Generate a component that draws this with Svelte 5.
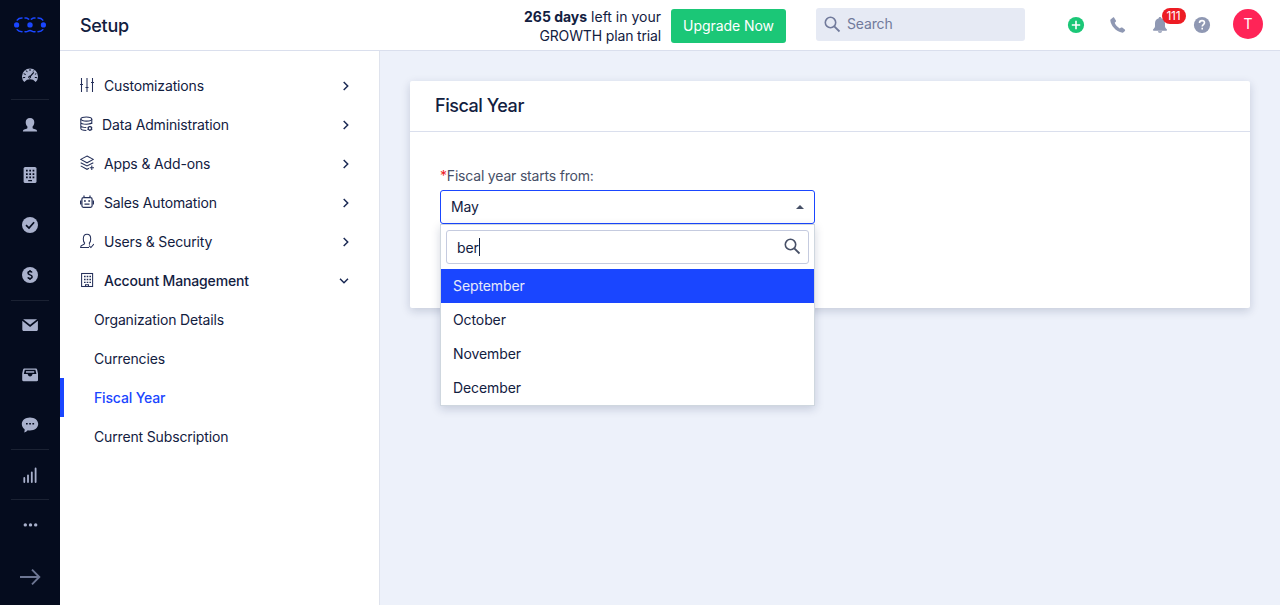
<script>
  const menu = [
    { label: 'Customizations', icon: 'sliders' },
    { label: 'Data Administration', icon: 'database' },
    { label: 'Apps & Add-ons', icon: 'layers' },
    { label: 'Sales Automation', icon: 'robot' },
    { label: 'Users & Security', icon: 'user' },
    { label: 'Account Management', icon: 'office', open: true }
  ];
  const children = ['Organization Details', 'Currencies', 'Fiscal Year', 'Current Subscription'];
  const current = 'Fiscal Year';
  const rail = [
    { name: 'dashboard', line: true },
    { name: 'contact' },
    { name: 'building' },
    { name: 'tasks' },
    { name: 'deals', line: true },
    { name: 'mail' },
    { name: 'inbox' },
    { name: 'chat', line: true },
    { name: 'reports', line: true },
    { name: 'more' }
  ];
  const months = ['September', 'October', 'November', 'December'];
  const active = 'September';
</script>

<div class="app">
  <aside class="rail">
    <div class="logo">
      <svg width="32" height="16" viewBox="0 0 32 16" fill="none" stroke="#1a46ff" stroke-width="1.5" stroke-linecap="round">
        <path d="M3.200 3.100C4.200 1.500 5.600 1 8 1M11 1h1.200c1.100 0 1.700.7 2.500 1.200M17.300 2.200c.8-.5 1.400-1.200 2.500-1.200H21M24 1c2.400 0 3.800.5 4.800 2.100M3.200 12.700c1 1.600 2.400 2.100 4.800 2.100M11 14.800h1.200c1.500 0 2.300-1.300 3.800-1.300s2.300 1.300 3.800 1.300H21M24 14.800c2.400 0 3.800-.5 4.800-2.100" />
        <g fill="#1a46ff" stroke="none"><circle cx="2.600" cy="7.900" r="2.600" /><circle cx="16" cy="7.900" r="2.700" /><circle cx="29.400" cy="7.900" r="2.600" /></g>
      </svg>
    </div>
    {#each rail as item}
      <div class="slot {item.name}" class:line={item.line}>
        <svg width="18" height="18" viewBox="0 0 18 18" fill="#a9b1cc">
          {#if item.name === 'dashboard'}
            <path d="M3.300 16A8 8 0 1 1 14.700 16L12 13.800Q9 12.500 6 13.800Z" />
            <g stroke="#050c1e" stroke-width="1" fill="none"><path d="M9 3v2M5.200 4.500l1.100 1.600M2.700 7.700l2 .8M2 11.700l2.200-.3M12.800 4.500l-.7 1M15.300 7.700l-1.400.6M16 11.700l-2.200-.3" /><path d="M8.600 11.200l4.200-4.800" stroke-width="1.200" /><circle cx="8.600" cy="11.200" r="1" /></g>
          {:else if item.name === 'contact'}
            <path d="M9 2c2.800 0 4.300 1.700 4.300 4.200 0 1.900-.7 3.300-1.700 4.400v1.100c0 .6.300.9.900 1.100l2.300.8c.8.300 1.300.9 1.300 1.900H1.900c0-1 .5-1.600 1.300-1.900l2.300-.8c.6-.2.900-.5.900-1.100v-1.100C5.400 9.500 4.700 8.100 4.700 6.200 4.700 3.700 6.200 2 9 2z" />
          {:else if item.name === 'building'}
            <rect x="2.600" y="1" width="12.900" height="16" rx="1.600" />
            <path fill="#050c1e" d="M5 3.700h1.700v1.700H5zM8.300 3.700H10v1.700H8.300zM11.600 3.700h1.700v1.700h-1.700zM5 7.200h1.700v1.700H5zM8.300 7.200H10v1.700H8.300zM11.600 7.200h1.700v1.700h-1.700zM5 10.600h1.700v1.700H5zM8.300 10.600H10v1.700H8.300zM11.600 10.600h1.700v1.700h-1.700zM7.200 14H11v1.300H7.200z" />
          {:else if item.name === 'tasks'}
            <circle cx="9" cy="9" r="8" /><path d="M5 9.100l3 2.900 5.100-5.700" fill="none" stroke="#050c1e" stroke-width="1.700" />
          {:else if item.name === 'deals'}
            <circle cx="9" cy="9" r="8" /><path d="M11 6.500C10.600 5.700 9.900 5.500 9 5.500c-1.200 0-2 .6-2 1.600 0 2.400 4.100 1.200 4.100 3.700 0 1.100-.9 1.700-2.100 1.700-1 0-1.800-.4-2.200-1.200M9 4v1.500M9 12.500V14" fill="none" stroke="#050c1e" stroke-width="1.500" />
          {:else if item.name === 'mail'}
            <path d="M1.300 4.800v8.700c0 .9.600 1.500 1.500 1.500h12.600c.9 0 1.500-.6 1.500-1.500V4.800L9.100 11z" /><path d="M2.100 3.200h14L9.100 8.800z" />
          {:else if item.name === 'inbox'}
            <path fill-rule="evenodd" d="M3.500 2.400h11.200c.8 0 1.200.4 1.400 1.100l.9 4v6.500c0 .8-.5 1.200-1.200 1.200H2.400c-.7 0-1.200-.4-1.200-1.200V7.500l.9-4c.2-.7.6-1.100 1.400-1.100zM3.800 3.800l-1 4.300h3.900c.2 1.600 1.100 2.400 2.400 2.400s2.200-.8 2.400-2.400h3.900l-1-4.300z" /><path d="M5 5.200h8.200v1.500H5z" />
          {:else if item.name === 'chat'}
            <path d="M9 1.400c4.600 0 8.200 2.800 8.200 6.500s-3.600 6.500-8.200 6.500c-.8 0-1.500-.1-2.200-.2-1 1.100-2.300 1.900-3.700 2.300.5-1 .7-2.100.5-3.200C1.900 12.100.8 10.100.8 7.900.8 4.200 4.400 1.400 9 1.400z" /><path fill="#050c1e" d="M5 7h1.700v1.600H5zM8.200 7h1.700v1.600H8.200zM11.400 7h1.700v1.600h-1.700z" />
          {:else if item.name === 'reports'}
            <path d="M3.300 12v4M7 9.300V16M10.800 6.300V16M14.600 2.500V16" stroke="#a9b1cc" stroke-width="1.800" stroke-linecap="round" />
          {:else}
            <circle cx="4.300" cy="8.900" r="1.700" /><circle cx="9.500" cy="8.900" r="1.700" /><circle cx="14.700" cy="8.900" r="1.700" />
          {/if}
        </svg>
      </div>
    {/each}
    <div class="expand">
      <svg width="22" height="18" viewBox="0 0 22 18" fill="none" stroke="#6d7693" stroke-width="1.900"><path d="M1 9h19M13 1.700L20.300 9 13 16.300" /></svg>
    </div>
  </aside>

  <div class="page">
    <header>
      <h1>Setup</h1>
      <div class="trial"><b>265 days</b> left in your<br /><span>GROWTH plan trial</span></div>
      <button class="upgrade">Upgrade Now</button>
      <div class="search">
        <svg width="17" height="17" viewBox="0 0 17 17" fill="none" stroke="#717a9b" stroke-width="1.600"><circle cx="6.500" cy="6.500" r="5.200" /><path d="M10.300 10.300l5.200 5.200" stroke-width="1.800" /></svg>
        <span>Search</span>
      </div>
      <div class="tools">
        <svg width="18" height="18" viewBox="0 0 18 18"><circle cx="9" cy="9" r="8.100" fill="#1bc777" /><path d="M9 4.800v8.400M4.800 9h8.400" stroke="#fff" stroke-width="1.600" /></svg>
        <svg width="18" height="18" viewBox="0 0 18 18" fill="#8f98b3"><path d="M1.800 3.200L4 1.500c.4-.3.900-.3 1.200.2l1.700 2.900c.3.500.2.900-.2 1.200l-1 .9c.9 2.200 2.800 4.500 5.100 5.700l1.200-.8c.4-.3.800-.3 1.200 0l2.600 2c.5.400.5.900.1 1.300l-1.700 1.500c-.5.400-1 .4-1.700.2C6.500 15 2 9.600 1.300 4.500c-.1-.6.100-1 .5-1.300z" /></svg>
        <div class="bell">
          <svg width="18" height="18" viewBox="0 0 18 18" fill="#8f98b3"><path d="M9 1c.8 0 1.300.5 1.300 1.200 2.300.6 3.700 2.500 3.700 5v3.100c0 1.200.7 2 1.700 2.900.7.600.4 1.500-.5 1.500H2.800c-.9 0-1.200-.9-.5-1.500 1-.9 1.700-1.700 1.700-2.900V7.200c0-2.500 1.400-4.400 3.700-5C7.700 1.500 8.200 1 9 1zM6.900 15.200h4.200c-.2 1-1 1.600-2.100 1.600s-1.900-.6-2.100-1.600z" /></svg>
          <span class="badge">111</span>
        </div>
        <svg width="18" height="18" viewBox="0 0 18 18"><circle cx="9" cy="9" r="8.100" fill="#8f98b3" /><path d="M6.500 7c0-1.500 1-2.400 2.500-2.400s2.500.9 2.500 2.200c0 1.800-2.300 1.800-2.300 3.700M9.200 11.700v1.800" fill="none" stroke="#fff" stroke-width="1.600" /></svg>
      </div>
      <div class="avatar">T</div>
    </header>

    <div class="body">
      <nav>
        {#each menu as item}
          <div class="item" class:bold={item.open} class:near={item.icon === 'database'}>
            <svg class="glyph" width="14" height="16" viewBox="0 0 14 16" fill="none" stroke="#25305a" stroke-width="1.050">
              {#if item.icon === 'sliders'}
                <path d="M1.500 1v14M7 1v14M12.500 1v14M0 7.500h3M5.500 10.500h3M11 5.500h3" />
              {:else if item.icon === 'database'}
                <ellipse cx="6.300" cy="3" rx="5.500" ry="2.100" /><path d="M.8 3v9.300c0 1.200 2.400 2.100 5.600 2.100M11.800 3v4.900M.8 6.200c0 1.100 2.400 2 5.500 2s5.500-.9 5.500-2M.8 9.400c0 1.100 2.400 2 5.500 2" /><circle cx="9.900" cy="12.400" r="1.700" stroke-width="1.300" /><path d="M9.900 9.900v1M9.900 13.900v1M7.600 11.100l.8.500M11.400 13.200l.8.500M7.600 13.700l.8-.5M11.400 11.600l.8-.5" />
              {:else if item.icon === 'layers'}
                <path d="M7 1l6.300 3.400L7 7.800.7 4.400zM.7 7.700L7 11l6.300-3.300M.7 10.900L7 14.300l2-1M11.800 10.500v4.400M9.700 12.700H14" />
              {:else if item.icon === 'robot'}
                <path d="M3.400 3.700h7.200c1 0 1.500.6 1.500 1.500v6.600c0 .9-.5 1.500-1.500 1.500H3.400c-1 0-1.500-.6-1.500-1.500V5.200c0-.9.500-1.500 1.500-1.500zM4 3.700V1.500M10 3.700V1.500M.5 6.500v4M13.500 6.500v4M4.500 10.200h5" stroke-width="1.200" /><path d="M4 6.200h1.800v1.600H4zM8.300 6.200h1.800v1.600H8.300z" fill="#25305a" stroke="none" />
              {:else if item.icon === 'user'}
                <path d="M9 14.500H.6c0-1.700.5-2.100 2-2.500 1.500-.4 2.100-.7 2.100-1.900-1-.8-1.400-2.200-1.400-4.200C3.300 2.900 4.500 1.200 7 1.200s3.700 1.700 3.700 4.700c0 2-.5 3.400-1.400 4.200 0 .8.100 1.200.6 1.500M9 12.600l1.900 1.900 3-3.500" />
              {:else}
                <rect x="1.600" y="1.500" width="11" height="13" /><path d="M4 4.500h1.600M6.700 4.500h1.600M9.400 4.500H11M4 7.500h1.600M6.700 7.500h1.600M9.400 7.500H11M4 10.300h1.600M6.700 10.300h1.600M9.400 10.300H11" stroke-width="1.300" /><path d="M5.500 14.500v-1.700h3v1.700" />
              {/if}
            </svg>
            <span>{item.label}</span>
            <svg class="arrow" class:down={item.open} width="10" height="10" viewBox="0 0 10 10" fill="none" stroke="#1b2a55" stroke-width="1.500"><path d="M2.700 1l4 4-4 4" /></svg>
          </div>
        {/each}
        {#each children as label}
          <div class="child" class:current={label === current}>{label}</div>
        {/each}
      </nav>

      <main>
        <section class="card">
          <h2>Fiscal Year</h2>
          <div class="form">
            <label for="month"><i>*</i>Fiscal year starts from:</label>
            <div class="select">
              <div class="value">May<svg width="8" height="4" viewBox="0 0 8 4"><path d="M0 4l4-4 4 4z" fill="#475067" /></svg></div>
              <div class="dropdown">
                <div class="filter">
                  <span class="typed">ber</span>
                  <svg width="17" height="17" viewBox="0 0 17 17" fill="none" stroke="#475067" stroke-width="1.600"><circle cx="6.500" cy="6.500" r="5.200" /><path d="M10.300 10.300l5.200 5.200" stroke-width="1.800" /></svg>
                </div>
                {#each months as month}
                  <div class="option" class:active={month === active}>{month}</div>
                {/each}
              </div>
            </div>
          </div>
        </section>
      </main>
    </div>
  </div>
</div>

<style>
  :global(body) { margin: 0; overflow: hidden; }
  * { box-sizing: border-box; }
  .app { display: flex; width: 1280px; height: 605px; overflow: hidden; background: #edf1fa; color: #12203f; font: 14px/20px Inter, "Liberation Sans", sans-serif; letter-spacing: -.15px; }
  svg { display: block; flex: none; }
  .rail { display: flex; flex-direction: column; align-items: center; width: 60px; background: #050c1e; }
  .logo { display: flex; align-items: center; justify-content: center; height: 50px; }
  .slot { display: flex; align-items: center; justify-content: center; width: 38px; height: 50px; border-bottom: 1px solid transparent; }
  .slot.line { border-color: #1b2233; }
  .slot.deals { height: 51px; }
  .slot.mail { height: 49px; }
  .expand { padding-top: 18px; }
  .page { flex: 1; display: flex; flex-direction: column; min-width: 0; }
  header { display: flex; align-items: flex-start; height: 51px; background: #fff; border-bottom: 1px solid #dadfed; }
  h1 { width: 380px; margin: 0; padding: 13px 0 0 20px; font-size: 18px; line-height: 25px; font-weight: 500; letter-spacing: -.3px; }
  .trial { width: 221px; padding-top: 7px; text-align: right; line-height: 19px; letter-spacing: 0; white-space: nowrap; }
  .trial span { letter-spacing: -.15px; }
  .trial b { font-weight: 700; }
  .upgrade { width: 115px; height: 34px; margin: 9px 0 0 10px; padding: 0; border: 0; border-radius: 3px; background: #1bc777; color: #fff; font: 14px/34px Inter, sans-serif; letter-spacing: -.06px; }
  .search { display: flex; align-items: center; gap: 6px; width: 209px; height: 33px; margin: 8px 0 0 30px; padding-left: 8px; border-radius: 3px; background: #e6eaf4; color: #717a9b; }
  .search span { padding-bottom: 2px; }
  .tools { display: flex; gap: 24px; margin: 16px 0 0 41.500px; }
  .bell { position: relative; }
  .badge { position: absolute; left: 11px; top: -8px; width: 24px; height: 16px; border-radius: 8px; background: #ed1c24; color: #fff; font-size: 12px; line-height: 16px; text-align: center; }
  .avatar { width: 30px; height: 30px; margin: 9px 0 0 22.500px; border-radius: 50%; background: #ff2457; color: #fff; line-height: 30px; text-align: center; }
  .body { flex: 1; display: flex; }
  nav { width: 320px; padding-top: 15px; background: #fff; border-right: 1px solid #dfe3ed; }
  .item { display: flex; align-items: center; height: 39px; padding: 0 28px 0 20px; }
  .item span { flex: 1; margin-left: 10px; padding-top: 1px; }
  .item.near span { margin-left: 8px; }
  .bold { font-weight: 500; }
  .glyph { position: relative; top: -1px; }
  .down { transform: rotate(90deg); margin-right: 2px; }
  .child { height: 39px; padding-left: 34px; line-height: 40px; }
  .current { padding-left: 30px; border-left: 4px solid #1a46ff; color: #1a46ff; font-weight: 500; }
  main { flex: 1; padding: 30px; }
  .card { height: 227px; background: #fff; border-radius: 2px; box-shadow: 0 3px 10px rgba(18, 32, 80, .18); }
  h2 { height: 51px; margin: 0; padding: 0 25px; border-bottom: 1px solid #dadfed; font-size: 18px; line-height: 50px; font-weight: 500; letter-spacing: -.45px; }
  .form { padding: 33px 30px; }
  label { display: block; height: 25px; color: #475067; line-height: 21px; letter-spacing: -.19px; }
  i { color: #ed1c24; font-style: normal; }
  .select { position: relative; width: 375px; }
  .value { display: flex; align-items: center; justify-content: space-between; height: 34px; padding: 0 10px; border: 1px solid #1a46ff; border-radius: 3px; }
  .dropdown { position: absolute; top: 34px; left: 0; width: 375px; padding-top: 5px; background: #fff; border: 1px solid #cfd7df; box-shadow: 0 3px 9px rgba(18, 32, 80, .18); }
  .filter { display: flex; align-items: center; justify-content: space-between; height: 34px; margin: 0 5px 5px; padding: 0 7px 0 10px; border: 1px solid #c5cbdf; border-radius: 3px; }
  .filter svg { margin-bottom: 2px; }
  .typed { padding-top: 1px; line-height: 17px; border-right: 1px solid #12203f; }
  .option { height: 34px; padding-left: 12px; line-height: 34px; letter-spacing: -.1px; }
  .active { background: #1a46ff; color: #e6eafa; }
</style>
